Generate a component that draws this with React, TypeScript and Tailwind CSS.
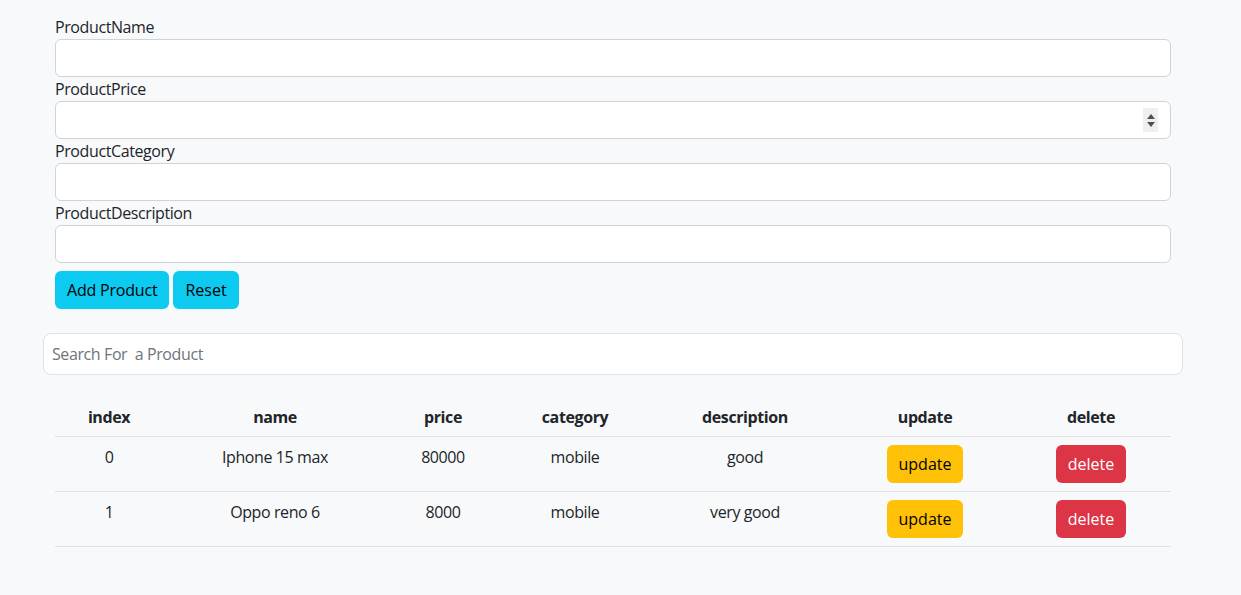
import React from "react";

const rows = [
  { name: "Iphone 15 max", price: "80000", category: "mobile", description: "good" },
  { name: "Oppo reno 6", price: "8000", category: "mobile", description: "very good" },
];

function Field({ label, spinner }: { label: string; spinner?: boolean }) {
  return (
    <div>
      <label className="block leading-6">{label}</label>
      <div className="relative">
        <input
          type="text"
          className="block w-full h-[38px] rounded-[6px] border border-[#ced4da] bg-white px-3 outline-none"
        />
        {spinner && (
          <div className="absolute left-[1088px] top-[7px] w-[15px] h-[24px] bg-[#efefef] flex flex-col items-center justify-center gap-[3px]">
            <svg width="8" height="5" viewBox="0 0 8 5"><path d="M0 5 L4 0 L8 5 Z" fill="#505050" /></svg>
            <svg width="8" height="5" viewBox="0 0 8 5"><path d="M0 0 L4 5 L8 0 Z" fill="#505050" /></svg>
          </div>
        )}
      </div>
    </div>
  );
}

export default function App() {
  return (
    <div
      className="min-h-screen bg-[#f8f9fa] text-[#212529] text-base leading-6 tracking-[-0.4px]"
      style={{ fontFamily: '"Open Sans", "Noto Sans", sans-serif' }}
    >
      <div className="w-[1140px] ml-[43px] pt-[15px] pb-10">
        <form className="px-3" onSubmit={(e) => e.preventDefault()}>
          <Field label="ProductName" />
          <Field label="ProductPrice" spinner />
          <Field label="ProductCategory" />
          <Field label="ProductDescription" />
          <div className="mt-2 flex gap-1">
            <button type="button" className="h-[38px] px-3 rounded-[6px] bg-[#0dcaf0] text-black tracking-[-0.2px]">
              Add Product
            </button>
            <button type="button" className="h-[38px] px-3 rounded-[6px] bg-[#0dcaf0] text-black tracking-normal">
              Reset
            </button>
          </div>
        </form>
        <input
          type="text"
          placeholder="Search For  a Product"
          className="mt-6 block w-full h-[42px] rounded-[8px] border border-[#dee2e6] bg-white px-2 outline-none placeholder:text-[#6c757d]"
        />
        <div className="px-3 mt-[21px]">
          <table className="w-full table-fixed border-collapse">
            <thead>
              <tr className="border-b border-[#dee2e6]">
                <th className="w-[108px] p-2 pt-[9px] pb-[7px] font-bold">index</th>
                <th className="w-[224px] p-2 pt-[9px] pb-[7px] font-bold">name</th>
                <th className="w-[112px] p-2 pt-[9px] pb-[7px] font-bold">price</th>
                <th className="w-[152px] p-2 pt-[9px] pb-[7px] font-bold">category</th>
                <th className="w-[188px] p-2 pt-[9px] pb-[7px] font-bold">description</th>
                <th className="w-[172px] p-2 pt-[9px] pb-[7px] font-bold">update</th>
                <th className="w-[160px] p-2 pt-[9px] pb-[7px] font-bold">delete</th>
              </tr>
            </thead>
            <tbody>
              {rows.map((r, i) => (
                <tr key={i} className="border-b border-[#dee2e6]">
                  <td className="p-2 text-center align-top">{i}</td>
                  <td className="p-2 text-center align-top">{r.name}</td>
                  <td className="p-2 text-center align-top">{r.price}</td>
                  <td className="p-2 text-center align-top">{r.category}</td>
                  <td className="p-2 text-center align-top">{r.description}</td>
                  <td className="p-2 text-center align-top">
                    <button className="h-[38px] px-3 rounded-[6px] bg-[#ffc107] text-black tracking-normal">update</button>
                  </td>
                  <td className="p-2 text-center align-top">
                    <button className="h-[38px] px-3 rounded-[6px] bg-[#dc3545] text-white tracking-normal">delete</button>
                  </td>
                </tr>
              ))}
            </tbody>
          </table>
        </div>
      </div>
    </div>
  );
}
